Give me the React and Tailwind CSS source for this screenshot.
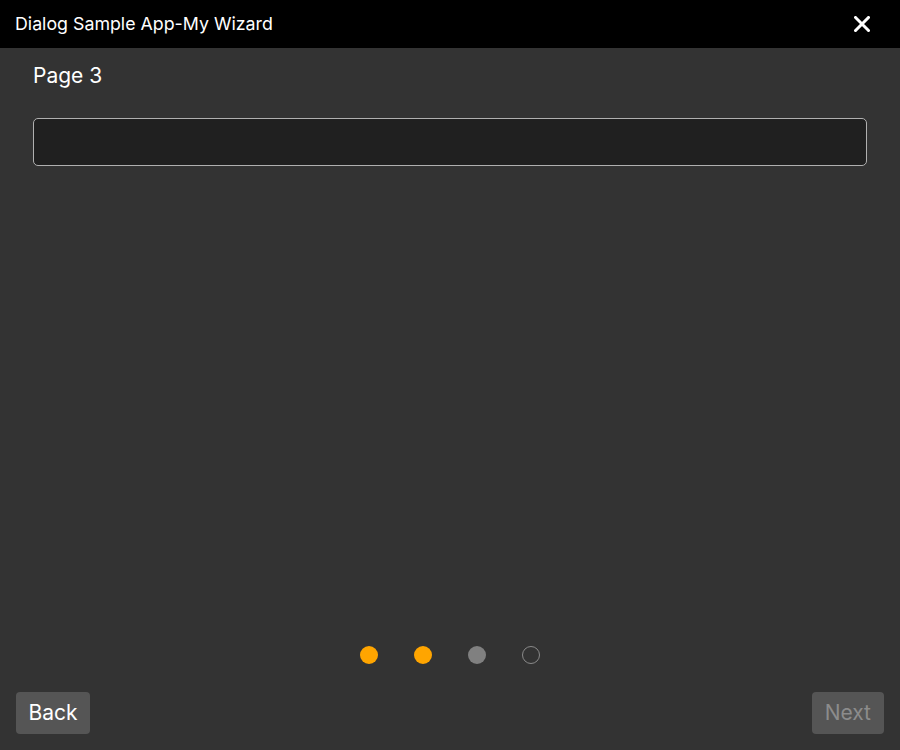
// App.jsx
// Wizard dialog: title bar, page content, step dots and Back/Next buttons
import React from 'react';

const steps = ['done', 'done', 'current', 'todo'];

function StepDot({ state }) {
  if (state === 'done') return <span className="block w-[18px] h-[18px] rounded-full bg-[#ffa500]" />;
  if (state === 'current') return <span className="block w-[18px] h-[18px] rounded-full bg-[#808080]" />;
  return <span className="block w-[18px] h-[18px] rounded-full border-[1.5px] border-[#8a8a8a]" />;
}

export default function App() {
  return (
    <div className="w-[900px] h-[750px] flex flex-col bg-[#333333] font-['Inter',_'Liberation_Sans',_sans-serif] overflow-hidden">
      {/* title bar */}
      <div className="h-12 bg-black flex items-center justify-between pl-[15px] pr-[30px] shrink-0">
        <span className="text-white text-[17.8px] pt-[1px]">Dialog Sample App-My Wizard</span>
        <svg width="16" height="16" viewBox="0 0 16 16">
          <path d="M1.5 1.5 L14.5 14.5 M14.5 1.5 L1.5 14.5" stroke="white" strokeWidth="3" strokeLinecap="square" />
        </svg>
      </div>

      {/* page content */}
      <div className="flex-1 flex flex-col px-[33px] pt-[14px]">
        <div className="text-white text-[21px] leading-[28px]">Page 3</div>
        <input
          className="mt-[28px] h-[48px] w-full rounded-[5px] border border-[#b0b0b0] bg-[#202020] text-white px-3 outline-none"
        />
      </div>

      {/* step indicator */}
      <div className="flex justify-center gap-9 pb-[28px]">
        {steps.map((s, i) => (
          <StepDot key={i} state={s} />
        ))}
      </div>

      {/* footer buttons */}
      <div className="flex justify-between px-4 pb-4">
        <button className="h-[42px] px-[12.5px] rounded bg-[#555555] text-white text-[21px]">Back</button>
        <button className="h-[42px] px-[13px] rounded bg-[#555555] text-[#8c8c8c] text-[21px]" disabled>Next</button>
      </div>
    </div>
  );
}
